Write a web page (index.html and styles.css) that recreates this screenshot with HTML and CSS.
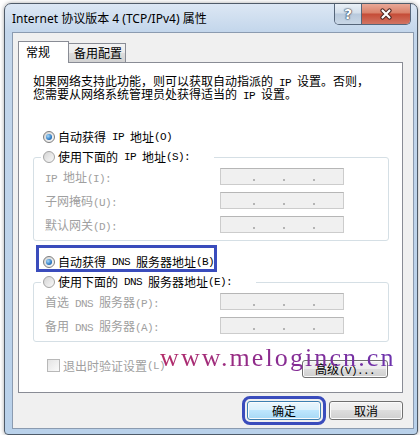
FILE: index.html
```html
<!DOCTYPE html>
<html lang="zh-CN">
<head>
    <meta charset="UTF-8">
    <meta name="viewport" content="width=device-width, initial-scale=1.0">
    <title>Internet 协议版本 4 (TCP/IPv4) 属性</title>
    <link rel="stylesheet" href="styles.css">
</head>
<body>
    <div class="window">
        <div class="titlebar">
            <span class="title">Internet 协议版本 4 (TCP/IPv4) 属性</span>
            <div class="caption-btns">
                <span class="help-btn">?</span>
                <span class="close-btn">
                    <svg width="16" height="12" viewBox="0 0 16 12">
                        <path d="M4.5 2.5 L11.5 9.5 M11.5 2.5 L4.5 9.5" stroke="#4a2420" stroke-width="4.2" stroke-linecap="round"/>
                        <path d="M4.5 2.5 L11.5 9.5 M11.5 2.5 L4.5 9.5" stroke="#fff" stroke-width="2.2" stroke-linecap="round"/>
                    </svg>
                </span>
            </div>
        </div>

        <div class="client">
            <div class="tabs">
                <span class="tab active">常规</span>
                <span class="tab">备用配置</span>
            </div>

            <div class="panel">
                <p class="desc">如果网络支持此功能，则可以获取自动指派的<span class="en"> IP </span>设置。否则，<br>您需要从网络系统管理员处获得适当的<span class="en"> IP </span>设置。</p>

                <label class="radio on first"><span class="dot"></span>自动获得<span class="en"> IP </span>地址<span class="en">(O)</span></label>

                <fieldset class="group">
                    <legend><label class="radio"><span class="dot"></span>使用下面的<span class="en"> IP </span>地址<span class="en">(S):</span></label></legend>
                    <div class="row">
                        <span class="lbl"><span class="en">IP </span>地址<span class="en">(I):</span></span>
                        <span class="ip"><i></i><i></i><i></i></span>
                    </div>
                    <div class="row">
                        <span class="lbl">子网掩码<span class="en">(U):</span></span>
                        <span class="ip"><i></i><i></i><i></i></span>
                    </div>
                    <div class="row">
                        <span class="lbl">默认网关<span class="en">(D):</span></span>
                        <span class="ip"><i></i><i></i><i></i></span>
                    </div>
                </fieldset>

                <div class="mark">
                    <label class="radio on"><span class="dot"></span>自动获得<span class="en"> DNS </span>服务器地址<span class="en">(B)</span></label>
                </div>

                <fieldset class="group dns">
                    <legend><label class="radio"><span class="dot"></span>使用下面的<span class="en"> DNS </span>服务器地址<span class="en">(E):</span></label></legend>
                    <div class="row">
                        <span class="lbl">首选<span class="en"> DNS </span>服务器<span class="en">(P):</span></span>
                        <span class="ip"><i></i><i></i><i></i></span>
                    </div>
                    <div class="row">
                        <span class="lbl">备用<span class="en"> DNS </span>服务器<span class="en">(A):</span></span>
                        <span class="ip"><i></i><i></i><i></i></span>
                    </div>
                </fieldset>

                <div class="foot">
                    <label class="check"><span class="box"></span>退出时验证设置<span class="en">(L)</span></label>
                    <button class="btn adv">高级<span class="en">(V)...</span></button>
                </div>
            </div>

            <div class="actions">
                <button class="btn default">确定</button>
                <button class="btn">取消</button>
            </div>
        </div>
    </div>

    <div class="watermark">www.melogincn.cn</div>
</body>
</html>
```

FILE: styles.css
```css
:root {
    --frame: #b9d1ea;
    --frame-top: #dce7f4;
    --frame-edge: #4f5b69;
    --client-edge: #8b9bb0;
    --client-bg: #f0f0f0;
    --tab-border: #898c95;
    --group-border: #d5dfe5;
    --disabled: #a0a0a0;
    --mark: #3a4cbc;
}

body {
    margin: 0;
    background: #fff;
    font: 12px "Noto Sans CJK SC", sans-serif;
    color: #000;
    overflow: hidden;
}

/* latin bits are half width, like the dialog's bitmap font */
.en {
    font-family: "Liberation Mono", monospace;
    font-size: 11px;
    line-height: 0;
    letter-spacing: -0.6px;
    white-space: pre;
}

/* window frame */
.window {
    display: flex;
    flex-direction: column;
    margin: 3px 0 0 4px;
    width: 414px;
    height: 432px;
    box-sizing: border-box;
    border: 1px solid var(--frame-edge);
    border-radius: 7px 7px 4px 4px;
    padding: 0 3px 5px 7px;
    background: linear-gradient(var(--frame-top), #c3d6eb 28px, var(--frame));
    box-shadow: 0 0 4px rgba(0, 0, 0, 0.35);
}

.titlebar {
    display: flex;
    justify-content: space-between;
    align-items: flex-start;
    height: 28px;
    flex: none;
}

.title {
    margin-top: 5px;
    line-height: 20px;
    font-family: "Noto Sans", "Noto Sans CJK SC", sans-serif;
    font-size: 12px;
}

.caption-btns {
    display: flex;
    height: 20px;
    margin-right: 3px;
    border: 1px solid #56667a;
    border-top: none;
    border-radius: 0 0 5px 5px;
    overflow: hidden;
}

.help-btn {
    width: 26px;
    text-align: center;
    font: bold 14px/20px "DejaVu Sans", sans-serif;
    color: #fff;
    text-shadow: 0 0 1px #2e3d52, 0 0 1px #2e3d52, 0 0 2px #2e3d52;
    background: linear-gradient(#eaf0f7, #d3dfeb 45%, #b8c9dc 50%, #c9d7e6);
    border-right: 1px solid #56667a;
}

.close-btn {
    width: 48px;
    display: flex;
    align-items: center;
    justify-content: center;
    background: linear-gradient(#e9a897, #d98069 45%, #c54c37 50%, #d27462);
}

/* client area */
.client {
    flex: 1;
    background: var(--client-bg);
    border: 1px solid var(--client-edge);
    padding: 8px 10px 0 5px;
}

.tabs {
    display: flex;
    align-items: flex-end;
    height: 21px;
}

.tab {
    height: 19px;
    box-sizing: border-box;
    border: 1px solid var(--tab-border);
    border-bottom: none;
    padding: 0 3px 0 5px;
    margin-left: -1px;
    line-height: 18px;
    background: linear-gradient(#f3f3f3, #ebebeb 50%, #dddddd 50%, #d2d2d2);
}

.tab.active {
    position: relative;
    z-index: 1;
    height: 22px;
    margin: 0 0 -1px 0;
    padding: 0 18px 0 7px;
    line-height: 20px;
    background: #fff;
}

.panel {
    height: 331px;
    box-sizing: border-box;
    background: #fff;
    border: 1px solid var(--tab-border);
    padding: 11px 13px 0 14px;
}

.desc {
    margin: 0;
    line-height: 13px;
    white-space: nowrap;
}

/* radios */
.radio {
    display: flex;
    align-items: center;
    height: 14px;
    line-height: 14px;
    white-space: nowrap;
}

.radio.first {
    margin: 30px 0 0 10px;
}

.dot {
    flex: none;
    display: flex;
    align-items: center;
    justify-content: center;
    width: 12px;
    height: 12px;
    box-sizing: border-box;
    margin-right: 3px;
    border: 1px solid #a4a4a4;
    border-radius: 50%;
    background: linear-gradient(135deg, #d4d4d4, #f9f9f9);
}

.radio.on .dot {
    border-color: #7d7d7d;
}

.radio.on .dot::after {
    content: "";
    width: 6px;
    height: 6px;
    border-radius: 50%;
    background: radial-gradient(circle at 35% 35%, #a9daf9, #2f7cc6 60%, #124a84);
}

/* group boxes */
.group {
    margin: 6px 0 0 0;
    padding: 4px 0 7px 7px;
    border: 1px solid var(--group-border);
    border-radius: 3px;
    min-width: 0;
}

.group legend {
    padding: 0 24px 0 2px;
    height: 14px;
}

.row {
    display: flex;
    align-items: center;
    height: 17px;
    margin: 0 0 7px 4px;
    color: var(--disabled);
}

.row:last-child {
    margin-bottom: 0;
}

.lbl {
    width: 175px;
    white-space: nowrap;
}

.ip {
    display: flex;
    justify-content: space-between;
    align-items: flex-end;
    width: 124px;
    height: 17px;
    box-sizing: border-box;
    padding: 0 28px 3px 32px;
    border: 1px solid #cccccc;
    border-top-color: #b6b6b6;
    background: #f0f0f0;
}

.ip i {
    width: 2px;
    height: 2px;
    background: #b4b4b4;
}

.mark {
    width: fit-content;
    margin: 7px 0 0 6px;
    padding: 7px 0 0 4px;
    outline: 3px solid var(--mark);
}

/* footer of the tab */
.foot {
    display: flex;
    justify-content: space-between;
    align-items: flex-start;
    margin-top: 17px;
}

.check {
    display: flex;
    align-items: center;
    height: 13px;
    margin-left: 14px;
    color: var(--disabled);
    white-space: nowrap;
}

.box {
    width: 13px;
    height: 13px;
    box-sizing: border-box;
    margin-right: 3px;
    border: 1px solid #b8b8b8;
    background: linear-gradient(135deg, #e4e4e4, #fbfbfb);
}

.btn {
    font: inherit;
    color: #000;
    padding: 0;
    border: 1px solid #707070;
    border-radius: 3px;
    background: linear-gradient(#f2f2f2, #ebebeb 50%, #dddddd 50%, #cfcfcf);
    box-shadow: inset 0 0 0 1px #fbfbfb;
}

.adv {
    width: 86px;
    height: 18px;
    margin: 1px 1px 0 0;
    line-height: 14px;
}

.actions {
    display: flex;
    justify-content: flex-end;
    gap: 8px;
    margin-top: 8px;
}

.actions .btn {
    width: 74px;
    height: 19px;
    line-height: 15px;
}

.btn.default {
    border-color: #3c7fb1;
    background: linear-gradient(#eaf6fd, #d9f0fc 50%, #bee6fd 50%, #a7d9f5);
    outline: 3px solid var(--mark);
    outline-offset: 2px;
}

/* overlay text stamped on the screenshot */
.watermark {
    position: absolute;
    left: 160px;
    top: 345px;
    font: 26px/26px "Liberation Serif", serif;
    letter-spacing: 2.1px;
    background: linear-gradient(90deg, #b42c68, #8c2b8e 45%, #6c33ae);
    -webkit-background-clip: text;
    background-clip: text;
    color: transparent;
    white-space: nowrap;
}
```
